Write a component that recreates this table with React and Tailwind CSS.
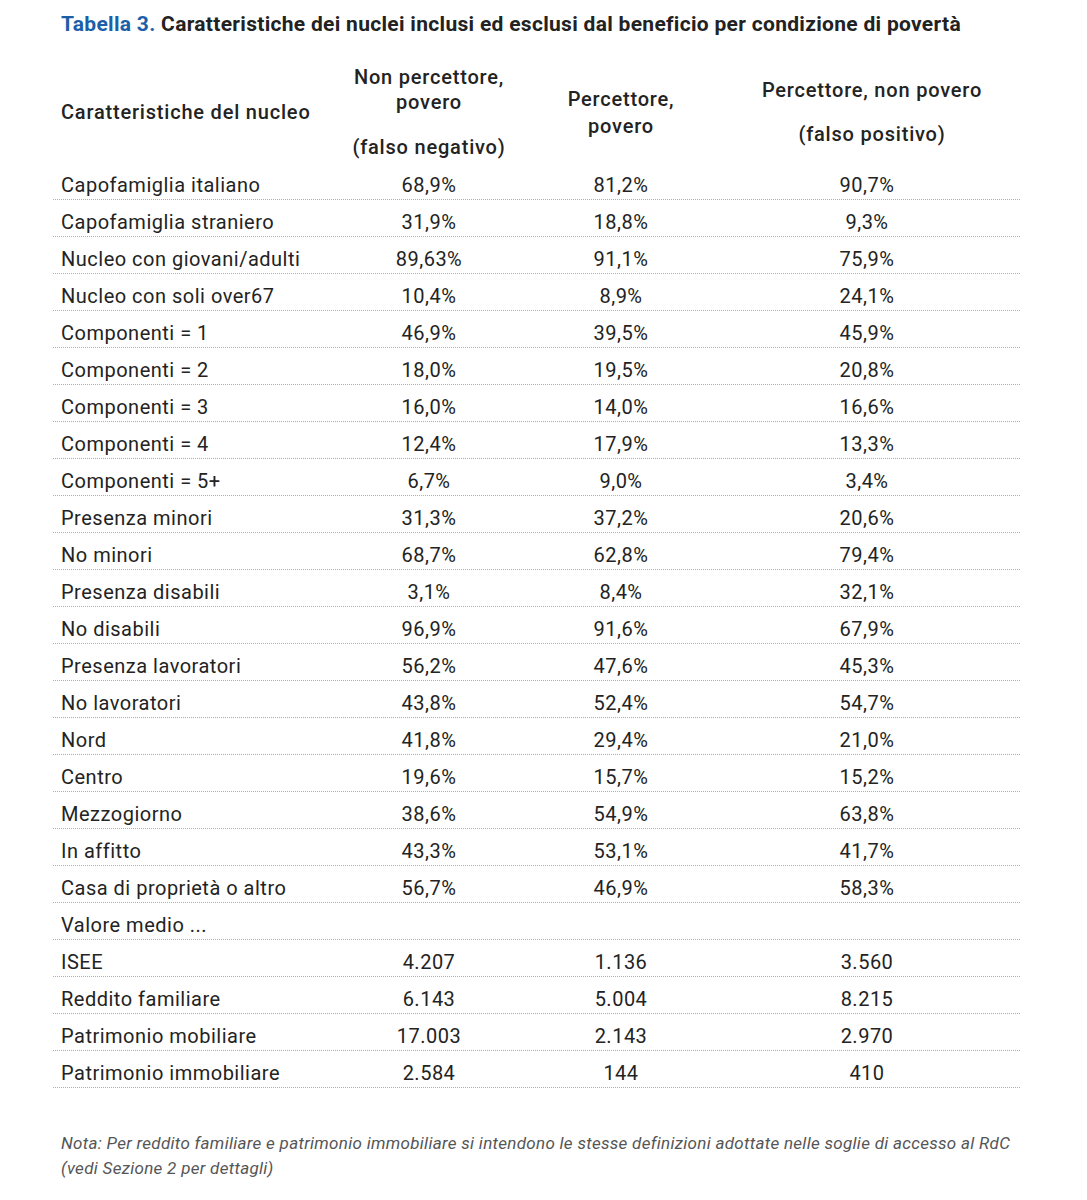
const rows = [
  ["Capofamiglia italiano", "68,9%", "81,2%", "90,7%"],
  ["Capofamiglia straniero", "31,9%", "18,8%", "9,3%"],
  ["Nucleo con giovani/adulti", "89,63%", "91,1%", "75,9%"],
  ["Nucleo con soli over67", "10,4%", "8,9%", "24,1%"],
  ["Componenti = 1", "46,9%", "39,5%", "45,9%"],
  ["Componenti = 2", "18,0%", "19,5%", "20,8%"],
  ["Componenti = 3", "16,0%", "14,0%", "16,6%"],
  ["Componenti = 4", "12,4%", "17,9%", "13,3%"],
  ["Componenti = 5+", "6,7%", "9,0%", "3,4%"],
  ["Presenza minori", "31,3%", "37,2%", "20,6%"],
  ["No minori", "68,7%", "62,8%", "79,4%"],
  ["Presenza disabili", "3,1%", "8,4%", "32,1%"],
  ["No disabili", "96,9%", "91,6%", "67,9%"],
  ["Presenza lavoratori", "56,2%", "47,6%", "45,3%"],
  ["No lavoratori", "43,8%", "52,4%", "54,7%"],
  ["Nord", "41,8%", "29,4%", "21,0%"],
  ["Centro", "19,6%", "15,7%", "15,2%"],
  ["Mezzogiorno", "38,6%", "54,9%", "63,8%"],
  ["In affitto", "43,3%", "53,1%", "41,7%"],
  ["Casa di proprietà o altro", "56,7%", "46,9%", "58,3%"],
  ["Valore medio ...", "", "", ""],
  ["ISEE", "4.207", "1.136", "3.560"],
  ["Reddito familiare", "6.143", "5.004", "8.215"],
  ["Patrimonio mobiliare", "17.003", "2.143", "2.970"],
  ["Patrimonio immobiliare", "2.584", "144", "410"],
];

const cols = "grid grid-cols-[287px_178px_206px_296px]";

export default function App() {
  return (
    <div className="w-[1087px] min-h-[1200px] bg-white pt-[12px] text-[#232323] font-['Roboto',sans-serif]">
      {/* Title */}
      <h1 className="pl-[61px] text-[21px] leading-[24px] font-bold tracking-[0.3px] text-[#222]">
        <span className="text-[#1d5ea8]">Tabella 3.</span> Caratteristiche dei nuclei inclusi ed esclusi dal beneficio per condizione di povertà
      </h1>

      <div className="ml-[53px] w-[967px] mt-[26px]">
        {/* Header */}
        <div className={`${cols} h-[101px] items-center text-[20px] font-medium tracking-[0.8px]`}>
          <div className="pl-[8px] leading-[25px]">Caratteristiche del nucleo</div>
          <div className="text-center leading-[25px]">
            <div>Non percettore,</div>
            <div>povero</div>
            <div className="mt-[20px]">(falso negativo)</div>
          </div>
          <div className="text-center leading-[27px]">
            <div>Percettore,</div>
            <div>povero</div>
          </div>
          <div className="text-center leading-[25px]">
            <div>Percettore, non povero</div>
            <div className="mt-[19px]">(falso positivo)</div>
          </div>
        </div>

        {/* Rows */}
        {rows.map((r) => (
          <div
            key={r[0]}
            className={`${cols} pt-[10px] pb-[2px] text-[20px] leading-[24px] tracking-[0.5px] border-b border-dotted border-[#9fb2c6]`}
          >
            <div className="pl-[8px]">{r[0]}</div>
            <div className="text-center">{r[1]}</div>
            <div className="text-center">{r[2]}</div>
            <div className="text-center pr-[10px]">{r[3]}</div>
          </div>
        ))}
      </div>

      {/* Note */}
      <p className="pl-[61px] pr-[20px] mt-[43px] text-[17px] leading-[25px] italic tracking-[0.3px] text-[#555]">
        Nota: Per reddito familiare e patrimonio immobiliare si intendono le stesse definizioni adottate nelle soglie di accesso al RdC
        <br />
        (vedi Sezione 2 per dettagli)
      </p>
    </div>
  );
}
